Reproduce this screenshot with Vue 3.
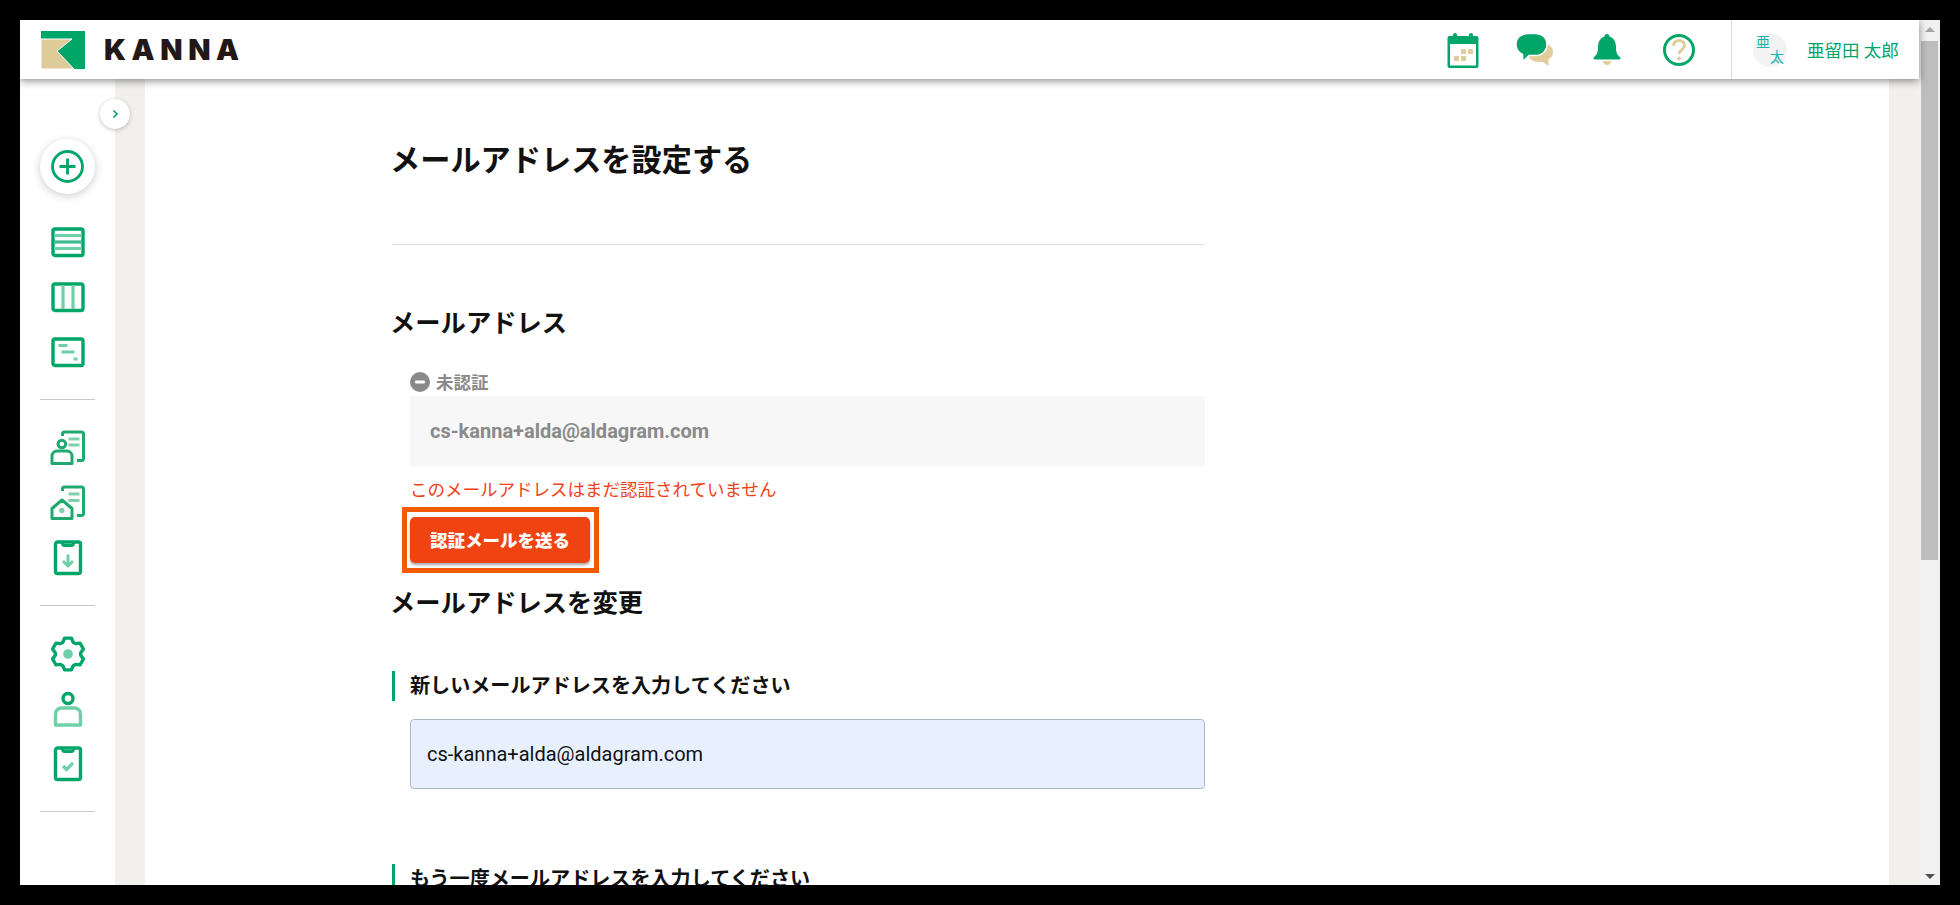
<script setup>
const dark = '#00a568'
const light = '#6fcfa8'
function gear() {
  const pts = []
  for (let i = 0; i < 6; i++) {
    const a = i * 60 - 90
    for (const [r, d] of [[12.8, -24], [16.2, -12], [16.2, 12], [12.8, 24]]) {
      const t = ((a + d) * Math.PI) / 180
      pts.push((20 + r * Math.cos(t)).toFixed(2) + ' ' + (20 + r * Math.sin(t)).toFixed(2))
    }
  }
  return 'M' + pts.join('L') + 'Z'
}
const gearPath = gear()
</script>

<template>
  <div class="frame">
    <div class="window">
      <div class="app">
        <header class="header">
          <div class="brand">
            <svg class="logo" width="44" height="38" viewBox="0 0 44 38">
              <rect width="44" height="38" fill="#00a568" />
              <path d="M0 8H31L16 20L33 38H0Z" fill="#decb98" stroke="#fff" stroke-width="1" />
            </svg>
            <span class="wordmark">KANNA</span>
          </div>
          <div class="tools">
            <div class="tool">
              <svg width="36" height="38" viewBox="0 0 36 38">
                <rect x="2.500" y="5" width="31" height="32" rx="2" fill="#00a568" />
                <rect x="8" y="2" width="4" height="6" rx="2" fill="#00a568" />
                <rect x="24" y="2" width="4" height="6" rx="2" fill="#00a568" />
                <rect x="5" y="13" width="26" height="21.500" fill="#fff" />
                <rect x="16" y="18" width="5" height="5" fill="#e0cd9b" />
                <rect x="23" y="18" width="5" height="5" fill="#e0cd9b" />
                <rect x="9" y="25" width="5" height="5" fill="#e0cd9b" />
                <rect x="16" y="25" width="5" height="5" fill="#e0cd9b" />
              </svg>
            </div>
            <div class="tool">
              <svg width="40" height="38" viewBox="0 0 40 38">
                <path d="M22 13H29c5.500 0 9 3.500 9 8 0 3.500-2 6-4.500 7.200L33.500 35 28 31H24c-6 0-9.500-3-10.500-6.500Z" fill="#e0cd9b" />
                <path d="M13 2.500H20C27 2.500 32 7 32 13.500S27 24.500 20 24.500H14L8 30.500 7.500 23.500C3.500 21.500 1 18 1 13.500 1 7 6 2.500 13 2.500Z" fill="#00a568" stroke="#fff" stroke-width="1.500" />
              </svg>
            </div>
            <div class="tool">
              <svg width="30" height="38" viewBox="0 0 30 38">
                <path d="M15 3c1.500 0 2.500 1 2.500 2.500C22 7 24 11 24 16c0 5 1 8 4 10 1 1 .5 2.500-1 2.500H3c-1.500 0-2-1.500-1-2.500 3-2 4-5 4-10 0-5 2-9 6.500-10.500C12.500 4 13.500 3 15 3Z" fill="#00a568" />
                <path d="M11 30h8c0 2.500-1.500 4-4 4s-4-1.500-4-4Z" fill="#e0cd9b" />
              </svg>
            </div>
            <div class="tool">
              <svg width="36" height="36" viewBox="0 0 36 36">
                <circle cx="18" cy="18" r="14.500" fill="none" stroke="#00a568" stroke-width="3" />
                <path d="M12.500 14c0-3.500 2.500-5.500 5.500-5.500s5.500 2 5.500 5c0 4.500-5.500 4.500-5.500 8.500" fill="none" stroke="#e0cd9b" stroke-width="3" />
                <circle cx="18" cy="26.500" r="2" fill="#e0cd9b" />
              </svg>
            </div>
          </div>
          <div class="user">
            <div class="avatar">
              <span class="av-a">亜</span>
              <span class="av-b">太</span>
            </div>
            <span class="name">亜留田 太郎</span>
          </div>
        </header>

        <div class="body">
          <aside class="sidebar">
            <button class="toggle">
              <svg width="10" height="10" viewBox="0 0 10 10">
                <path d="M3.500 1.500L7 5L3.500 8.500" fill="none" stroke="#00a568" stroke-width="1.600" />
              </svg>
            </button>
            <button class="add">
              <svg width="33" height="33" viewBox="0 0 33 33">
                <circle cx="16.500" cy="16.500" r="15" fill="none" stroke="#00a568" stroke-width="2.800" />
                <path d="M16.500 8.500V24.500M8.500 16.500H24.500" stroke="#00a568" stroke-width="2.800" />
              </svg>
            </button>

            <nav class="group">
              <div class="item">
                <svg width="40" height="40" viewBox="0 0 40 40" fill="none">
                  <rect x="5" y="7" width="30" height="26.500" rx="2" :stroke="dark" stroke-width="3.400" />
                  <path d="M6 13.500H34M6 26.500H34" :stroke="light" stroke-width="2.800" />
                  <path d="M6 20H34" stroke="#3fbb8d" stroke-width="3.200" />
                </svg>
              </div>
              <div class="item">
                <svg width="40" height="40" viewBox="0 0 40 40" fill="none">
                  <rect x="5" y="7" width="30" height="26.500" rx="2" :stroke="dark" stroke-width="3.400" />
                  <path d="M15 8V32M25 8V32" :stroke="light" stroke-width="3.200" />
                </svg>
              </div>
              <div class="item">
                <svg width="40" height="40" viewBox="0 0 40 40" fill="none">
                  <rect x="5" y="7" width="30" height="26.500" rx="2" :stroke="dark" stroke-width="3.400" />
                  <path d="M10.500 13.500H19.500M13.500 20H26.500M25.500 27H29.500" :stroke="light" stroke-width="2.800" />
                </svg>
              </div>
            </nav>
            <hr class="rule" />
            <nav class="group">
              <div class="item">
                <svg width="40" height="40" viewBox="0 0 40 40" fill="none">
                  <path d="M14.500 8V6a2 2 0 0 1 2-2H33.500a2 2 0 0 1 2 2V30.500a2 2 0 0 1-2 2H29" stroke="#1fa96e" stroke-width="3" />
                  <path d="M20.500 11H31.500M20.500 17H31.500" stroke="#80d0ad" stroke-width="2.800" />
                  <circle cx="13.800" cy="16" r="3.800" stroke="#1fa96e" stroke-width="3" fill="#fff" />
                  <path d="M4 35.500V28a5 5 0 0 1 5-5H19a5 5 0 0 1 5 5V35.500Z" stroke="#1fa96e" stroke-width="3" stroke-linejoin="round" fill="#fff" />
                </svg>
              </div>
              <div class="item">
                <svg width="40" height="40" viewBox="0 0 40 40" fill="none">
                  <path d="M14.500 8V6a2 2 0 0 1 2-2H33.500a2 2 0 0 1 2 2V30.500a2 2 0 0 1-2 2H29" stroke="#1fa96e" stroke-width="3" />
                  <path d="M20.500 11H31.500M20.500 17.500H31.500" stroke="#80d0ad" stroke-width="2.800" />
                  <path d="M4 35.500V25.500L14 17L24 25.500V35.500Z" stroke="#1fa96e" stroke-width="3" stroke-linejoin="round" fill="#fff" />
                  <circle cx="13.800" cy="27.500" r="2.700" fill="#80d0ad" />
                </svg>
              </div>
              <div class="item">
                <svg width="40" height="40" viewBox="0 0 40 40" fill="none">
                  <rect x="7.500" y="4" width="25" height="31.500" rx="2" :stroke="dark" stroke-width="3.400" />
                  <path d="M14.500 4V5.500a2 2 0 0 0 2 2h7a2 2 0 0 0 2-2V4" :stroke="dark" stroke-width="2.800" />
                  <path d="M20 16.500V28M15 23L20 28L25 23" :stroke="light" stroke-width="3" />
                </svg>
              </div>
            </nav>
            <hr class="rule" />
            <nav class="group">
              <div class="item">
                <svg width="40" height="40" viewBox="0 0 40 40" fill="none">
                  <path :d="gearPath" :stroke="dark" stroke-width="3.400" stroke-linejoin="round" />
                  <circle cx="20" cy="20" r="4.800" :fill="light" />
                </svg>
              </div>
              <div class="item">
                <svg width="40" height="40" viewBox="0 0 40 40" fill="none">
                  <circle cx="20" cy="9.500" r="5" :stroke="dark" stroke-width="3.400" />
                  <path d="M7.500 36V25a6 6 0 0 1 6-6h13a6 6 0 0 1 6 6V36Z" :stroke="light" stroke-width="3.400" stroke-linejoin="round" />
                </svg>
              </div>
              <div class="item">
                <svg width="40" height="40" viewBox="0 0 40 40" fill="none">
                  <rect x="7.500" y="4" width="25" height="31.500" rx="2" :stroke="dark" stroke-width="3.400" />
                  <path d="M14.500 4V5.500a2 2 0 0 0 2 2h7a2 2 0 0 0 2-2V4" :stroke="dark" stroke-width="2.800" />
                  <path d="M15 22L18.500 25.500L25 19" :stroke="light" stroke-width="3.200" />
                </svg>
              </div>
            </nav>
            <hr class="rule" />
          </aside>

          <main class="main">
            <div class="sheet">
              <h1 class="title">メールアドレスを設定する</h1>
              <hr class="divider" />
              <h2 class="h2 h2-first">メールアドレス</h2>
              <div class="indent">
                <div class="status">
                  <svg width="20" height="20" viewBox="0 0 20 20">
                    <circle cx="10" cy="10" r="10" fill="#8a8a8a" />
                    <rect x="5" y="8.500" width="10" height="3" rx="1" fill="#fff" />
                  </svg>
                  <span class="status-text">未認証</span>
                </div>
                <div class="readonly">cs-kanna+alda@aldagram.com</div>
                <p class="error">このメールアドレスはまだ認証されていません</p>
              </div>
              <div class="highlight">
                <button class="send">認証メールを送る</button>
              </div>
              <h2 class="h2 h2-change">メールアドレスを変更</h2>
              <div class="label">新しいメールアドレスを入力してください</div>
              <div class="input">cs-kanna+alda@aldagram.com</div>
              <div class="label label-next">もう一度メールアドレスを入力してください</div>
            </div>
          </main>
        </div>
      </div>

      <div class="scrollbar">
        <div class="arrow-up"></div>
        <div class="thumb"></div>
        <div class="arrow-down"></div>
      </div>
    </div>
  </div>
</template>

<style>
html, body { margin: 0; background: #000; overflow: hidden; }
</style>

<style scoped>
.frame {
  width: 1960px;
  height: 905px;
  box-sizing: border-box;
  padding: 20px;
  background: #000;
  font-family: Roboto, "Noto Sans CJK JP", sans-serif;
  color: #111;
}
.window { display: flex; height: 865px; overflow: hidden; background: #fff; }
.app { width: 1899px; display: flex; flex-direction: column; position: relative; }

.header {
  height: 59px;
  flex: none;
  display: flex;
  align-items: center;
  background: #fff;
  box-shadow: 0 2px 8px rgba(0, 0, 0, 0.45);
  position: relative;
  z-index: 3;
}
.brand { display: flex; align-items: center; padding-left: 21px; }
.logo { display: block; }
.wordmark {
  margin-left: 19px;
  font-family: Inter, sans-serif;
  font-weight: 900;
  font-size: 29px;
  line-height: 38px;
  letter-spacing: 5.600px;
  color: #231815;
}
.tools { margin-left: auto; display: flex; margin-right: 16px; }
.tool { width: 72px; display: flex; justify-content: center; align-items: center; }
.user {
  width: 188px;
  height: 59px;
  box-sizing: border-box;
  border-left: 1px solid #dcdcdc;
  padding-left: 21px;
  display: flex;
  align-items: center;
}
.avatar {
  width: 34px;
  height: 34px;
  border-radius: 50%;
  background: #f3f3f3;
  display: flex;
  flex-direction: column;
  font-size: 14px;
  line-height: 15px;
  color: #19b3b3;
}
.av-a { align-self: flex-start; margin-left: 3px; margin-top: 2px; }
.av-b { align-self: flex-end; margin-right: 3px; }
.name { margin-left: 20px; font-size: 17.500px; color: #00a568; white-space: nowrap; }

.body { flex: 1; display: flex; min-height: 0; }
.sidebar {
  width: 95px;
  flex: none;
  padding-top: 60px;
  box-sizing: border-box;
  display: flex;
  flex-direction: column;
  align-items: center;
  position: relative;
  background: #fff;
  z-index: 2;
}
.toggle {
  position: absolute;
  left: 80px;
  top: 20px;
  width: 30px;
  height: 30px;
  padding: 0;
  border: 0;
  border-radius: 50%;
  background: #fff;
  box-shadow: 0 1px 4px rgba(0, 0, 0, 0.25);
  display: flex;
  align-items: center;
  justify-content: center;
}
.add {
  width: 55px;
  height: 55px;
  flex: none;
  padding: 0;
  border: 0;
  border-radius: 50%;
  background: #fff;
  box-shadow: 0 2px 8px rgba(0, 0, 0, 0.2);
  margin-bottom: 20px;
  display: flex;
  align-items: center;
  justify-content: center;
}
.group { display: flex; flex-direction: column; }
.item { width: 55px; height: 55px; display: flex; align-items: center; justify-content: center; }
.rule { width: 55px; height: 1px; border: 0; background: #c8c8c8; margin: 20px 0; flex: none; }

.main {
  flex: 1;
  min-width: 0;
  background: #f1f0ec;
  padding: 0 30px;
}
.sheet {
  height: 100%;
  background: #fff;
  padding-left: 247px;
  padding-top: 61px;
  box-sizing: border-box;
  overflow: hidden;
  width: 1744px;
}
.title {
  margin: 1px 0 -1px -2px;
  font-size: 30.200px;
  line-height: 40px;
  font-weight: 700;
  width: 815px;
}
.divider { width: 813px; height: 1px; border: 0; background: #dedede; margin: 64px 0 0; }
.h2 { margin: 0 0 0 -2px; font-size: 25.300px; line-height: 36px; font-weight: 700; }
.h2-first { margin-top: 61px; margin-bottom: -1px; }
.h2-change { margin-top: 13px; margin-bottom: -1px; }
.indent { margin-left: 18px; width: 795px; }
.status {
  margin-top: 31px;
  height: 20px;
  display: flex;
  align-items: center;
  gap: 6px;
  font-size: 17.500px;
  font-weight: 700;
  color: #8a8a8a;
}
.status-text { margin-top: -2px; }
.readonly {
  margin-top: 4px;
  height: 70px;
  line-height: 70px;
  padding-left: 20px;
  background: #f7f7f7;
  color: #8a8a8a;
  font-size: 20px;
  font-weight: 700;
}
.error { margin: 11px 0 0; font-size: 17.500px; line-height: 26px; color: #f0421a; }
.highlight {
  margin: 4px 0 0 10px;
  width: 197px;
  height: 66px;
  box-sizing: border-box;
  border: 5px solid #f25a00;
  padding: 5px 3px;
}
.send {
  display: block;
  width: 180px;
  height: 46px;
  padding: 0 0 2px;
  border: 0;
  border-radius: 5px;
  background: #ef4412;
  color: #fff;
  font-family: inherit;
  font-size: 17.500px;
  font-weight: 900;
  box-shadow: 0 2px 3px rgba(0, 0, 0, 0.35);
}
.label {
  margin-top: 50px;
  height: 30px;
  line-height: 30px;
  border-left: 3px solid #00a568;
  padding-left: 15px;
  font-size: 20.100px;
  font-weight: 700;
  white-space: nowrap;
}
.label-next { margin-top: 75px; }
.input {
  margin: 18px 0 0 18px;
  width: 795px;
  height: 70px;
  box-sizing: border-box;
  line-height: 68px;
  padding-left: 16px;
  background: #e8f0fe;
  border: 1px solid #b0b8c8;
  border-radius: 4px;
  font-size: 20px;
}

.scrollbar {
  width: 21px;
  flex: none;
  background: #f1f1f1;
  display: flex;
  flex-direction: column;
  align-items: center;
  position: relative;
}
.arrow-up {
  width: 0;
  height: 0;
  margin-top: 7px;
  border-left: 5px solid transparent;
  border-right: 5px solid transparent;
  border-bottom: 5px solid #a3a3a3;
}
.thumb { width: 17px; height: 519px; background: #bdbdbd; margin-top: 9px; }
.arrow-down {
  width: 0;
  height: 0;
  margin-top: auto;
  margin-bottom: 6px;
  border-left: 5px solid transparent;
  border-right: 5px solid transparent;
  border-top: 5px solid #505050;
}
</style>
